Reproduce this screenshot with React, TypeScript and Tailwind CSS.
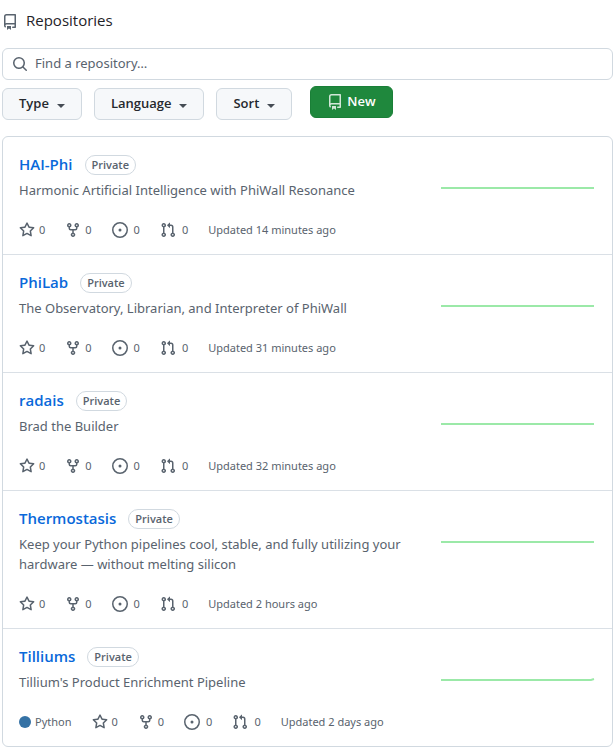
import type { ReactNode } from "react";

type Repo = {
  name: string;
  description: string;
  updated: string;
  language?: string;
  trend: string;
};

const FLAT = "M0 16H153";

const repos: Repo[] = [
  {
    name: "HAI-Phi",
    description: "Harmonic Artificial Intelligence with PhiWall Resonance",
    updated: "14 minutes ago",
    trend: FLAT,
  },
  {
    name: "PhiLab",
    description: "The Observatory, Librarian, and Interpreter of PhiWall",
    updated: "31 minutes ago",
    trend: FLAT,
  },
  {
    name: "radais",
    description: "Brad the Builder",
    updated: "32 minutes ago",
    trend: FLAT,
  },
  {
    name: "Thermostasis",
    description:
      "Keep your Python pipelines cool, stable, and fully utilizing your hardware — without melting silicon",
    updated: "2 hours ago",
    trend: FLAT,
  },
  {
    name: "Tilliums",
    description: "Tillium's Product Enrichment Pipeline",
    updated: "2 days ago",
    language: "Python",
    trend: "M0 16H150L153 15",
  },
];

const icons = {
  repo: "M2 2.5A2.5 2.5 0 0 1 4.5 0h8.75a.75.75 0 0 1 .75.75v12.5a.75.75 0 0 1-.75.75h-2.5a.75.75 0 0 1 0-1.5h1.75v-2h-8a1 1 0 0 0-.714 1.7.75.75 0 1 1-1.072 1.05A2.495 2.495 0 0 1 2 11.5Zm10.5-1h-8a1 1 0 0 0-1 1v6.708A2.486 2.486 0 0 1 4.5 9h8ZM5 12.25a.25.25 0 0 1 .25-.25h3.5a.25.25 0 0 1 .25.25v3.25a.25.25 0 0 1-.4.2l-1.45-1.087a.249.249 0 0 0-.3 0L5.4 15.7a.25.25 0 0 1-.4-.2Z",
  search:
    "M10.68 11.74a6 6 0 0 1-7.922-8.982 6 6 0 0 1 8.982 7.922l3.04 3.04a.749.749 0 0 1-.326 1.275.749.749 0 0 1-.734-.215ZM11.5 7a4.499 4.499 0 1 0-8.997 0A4.499 4.499 0 0 0 11.5 7Z",
  star: "M8 .25a.75.75 0 0 1 .673.418l1.882 3.815 4.21.612a.75.75 0 0 1 .416 1.279l-3.046 2.97.719 4.192a.751.751 0 0 1-1.088.791L8 12.347l-3.766 1.98a.75.75 0 0 1-1.088-.79l.72-4.194L.818 6.374a.75.75 0 0 1 .416-1.28l4.21-.611L7.327.668A.75.75 0 0 1 8 .25Zm0 2.445L6.615 5.5a.75.75 0 0 1-.564.41l-3.097.45 2.24 2.184a.75.75 0 0 1 .216.664l-.528 3.084 2.769-1.456a.75.75 0 0 1 .698 0l2.77 1.456-.53-3.084a.75.75 0 0 1 .216-.664l2.24-2.183-3.096-.45a.75.75 0 0 1-.564-.41L8 2.694Z",
  fork: "M5 5.372v.878c0 .414.336.75.75.75h4.5a.75.75 0 0 0 .75-.75v-.878a2.25 2.25 0 1 1 1.5 0v.878a2.25 2.25 0 0 1-2.25 2.25h-1.5v2.128a2.251 2.251 0 1 1-1.5 0V8.5h-1.5A2.25 2.25 0 0 1 3.5 6.25v-.878a2.25 2.25 0 1 1 1.5 0ZM5 3.25a.75.75 0 1 0-1.5 0 .75.75 0 0 0 1.5 0Zm6.75.75a.75.75 0 1 0 0-1.5.75.75 0 0 0 0 1.5Zm-3 8.75a.75.75 0 1 0-1.5 0 .75.75 0 0 0 1.5 0Z",
  issue:
    "M8 9.5a1.5 1.5 0 1 0 0-3 1.5 1.5 0 0 0 0 3ZM8 0a8 8 0 1 1 0 16A8 8 0 0 1 8 0ZM1.5 8a6.5 6.5 0 1 0 13 0 6.5 6.5 0 0 0-13 0Z",
  pull: "M1.5 3.25a2.25 2.25 0 1 1 3 2.122v5.256a2.251 2.251 0 1 1-1.5 0V5.372A2.25 2.25 0 0 1 1.5 3.25Zm5.677-.177L9.573.677A.25.25 0 0 1 10 .854V2.5h1A2.5 2.5 0 0 1 13.5 5v5.628a2.251 2.251 0 1 1-1.5 0V5a1 1 0 0 0-1-1h-1v1.646a.25.25 0 0 1-.427.177L7.177 3.427a.25.25 0 0 1 0-.354ZM3.75 2.5a.75.75 0 1 0 0 1.5.75.75 0 0 0 0-1.5Zm0 9.5a.75.75 0 1 0 0 1.5.75.75 0 0 0 0-1.5Zm8.25.75a.75.75 0 1 0 1.5 0 .75.75 0 0 0-1.5 0Z",
};

function Icon({ name, className = "" }: { name: keyof typeof icons; className?: string }) {
  return (
    <svg
      viewBox="0 0 16 16"
      aria-hidden
      className={`h-4 w-4 shrink-0 fill-current ${className}`}
    >
      <path fillRule="evenodd" d={icons[name]} />
    </svg>
  );
}

function FilterButton({ children }: { children: ReactNode }) {
  return (
    <button
      type="button"
      aria-haspopup="menu"
      className="flex h-8 items-center gap-2 rounded-md border border-[#d1d9e0] bg-[#f6f8fa] px-4 text-[13px] font-semibold text-[#25292e] hover:bg-[#eff2f5]"
    >
      {children}
      <svg viewBox="0 0 8 4" aria-hidden className="mt-1 h-1 w-2 fill-[#454c54]">
        <path d="M0 0h8L4 4Z" />
      </svg>
    </button>
  );
}

function Stat({
  icon,
  label,
  wide = false,
}: {
  icon: keyof typeof icons;
  label: string;
  wide?: boolean;
}) {
  return (
    <a
      href="#"
      aria-label={label}
      className={`flex items-center hover:text-[#0969da] ${wide ? "gap-1.5" : "gap-1"}`}
    >
      <Icon name={icon} />
      <span>0</span>
    </a>
  );
}

function RepoRow({ repo }: { repo: Repo }) {
  return (
    <li className="flex items-start justify-between px-4 py-[15px]">
      <div className="min-w-0 flex-1 pr-6">
        <div className="flex h-6 items-center gap-3">
          <h3 className="text-[15px] leading-6 font-semibold text-[#0969da]">
            <a href="#" className="hover:underline">
              {repo.name}
            </a>
          </h3>
          <span className="mt-0.5 flex h-5 items-center rounded-full border border-[#d1d9e0] px-1.5 text-[11px] font-semibold">
            Private
          </span>
        </div>
        <p className="mt-1 font-['Noto_Sans',sans-serif] text-[13px] leading-5">
          {repo.description}
        </p>
        <div className="mt-[21px] flex h-[18px] items-center gap-5 font-['Noto_Sans',sans-serif] text-[11px] whitespace-nowrap">
          {repo.language ? (
            <span className="flex items-center gap-1">
              <span className="h-3 w-3 rounded-full bg-[#3572a5]" />
              {repo.language}
            </span>
          ) : null}
          <Stat icon="star" label="0 stars" />
          <Stat icon="fork" label="0 forks" />
          <Stat icon="issue" label="0 issues" wide />
          <Stat icon="pull" label="0 pull requests" wide />
          <span>Updated {repo.updated}</span>
        </div>
      </div>
      <svg
        viewBox="0 0 155 30"
        role="img"
        aria-label="Past year of activity"
        className="mt-5 h-[30px] w-[155px] shrink-0"
      >
        <path d={repo.trend} fill="none" stroke="#9be9a8" strokeWidth="2" />
      </svg>
    </li>
  );
}

export default function App() {
  return (
    <main className="min-h-screen bg-white pr-px pl-0.5 font-['Open_Sans','Noto_Sans',sans-serif] text-[#59636e]">
      <h2 className="flex h-12 items-center gap-2 pb-2 text-[15px] text-[#1f2328]">
        <Icon name="repo" className="mt-1 text-[#59636e]" />
        Repositories
      </h2>

      <label className="flex h-8 items-center gap-[7px] rounded-md border border-[#d1d9e0] px-[9px] focus-within:border-[#0969da]">
        <Icon name="search" />
        <input
          type="text"
          aria-label="Find a repository"
          placeholder="Find a repository…"
          className="min-w-0 flex-1 bg-transparent font-['Noto_Sans',sans-serif] text-[13px] text-[#1f2328] outline-none placeholder:text-[#59636e]"
        />
      </label>

      <div className="mt-1.5 flex items-start gap-[18px]">
        <div className="mt-0.5 flex gap-3">
          <FilterButton>Type</FilterButton>
          <FilterButton>Language</FilterButton>
          <FilterButton>Sort</FilterButton>
        </div>
        <button
          type="button"
          className="flex h-8 items-center gap-1 rounded-md border border-[#1a7f37] bg-[#1f883d] px-4 text-[13px] font-semibold text-white hover:bg-[#1c8139]"
        >
          <Icon name="repo" className="text-white/80" />
          New
        </button>
      </div>

      <ul className="mt-4 divide-y divide-[#dae0e6] rounded-md border border-[#d1d9e0]">
        {repos.map((repo) => (
          <RepoRow key={repo.name} repo={repo} />
        ))}
      </ul>
    </main>
  );
}
